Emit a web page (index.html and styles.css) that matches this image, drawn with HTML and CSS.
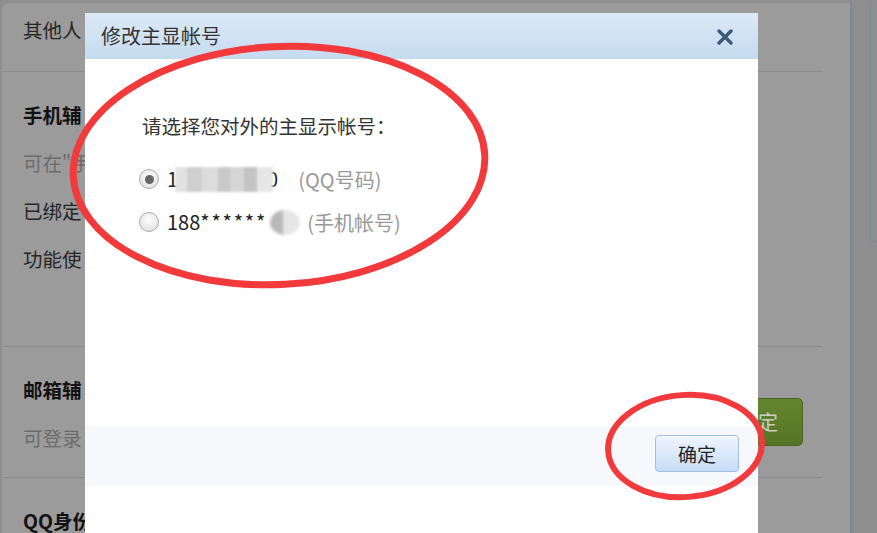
FILE: index.html
```html
<!DOCTYPE html>
<html lang="zh-CN">
<head>
<meta charset="utf-8">
<title>修改主显帐号</title>
<link rel="stylesheet" href="styles.css">
</head>
<body>
<div class="screen">
  <div class="page">
    <main class="main">
      <section class="sec sec-first">
        <p class="line">其他人</p>
      </section>
      <section class="sec sec-phone">
        <p class="line bold">手机辅</p>
        <p class="line muted">可在"手</p>
        <p class="line">已绑定</p>
        <p class="line">功能使</p>
      </section>
      <section class="sec sec-mail">
        <div class="mail-text">
          <p class="line bold">邮箱辅</p>
          <p class="line muted">可登录</p>
        </div>
        <span class="green-btn"><span class="green-hidden">确</span>定</span>
      </section>
      <section class="sec sec-qq">
        <p class="line bold">QQ身份</p>
      </section>
    </main>
    <aside class="side"><div class="side-box"></div></aside>
  </div>

  <div class="dialog">
    <div class="dlg-head">
      <span class="dlg-title">修改主显帐号</span>
      <svg class="dlg-close" width="16" height="16" viewBox="0 0 16 16" aria-label="关闭">
        <path d="M2 2 L14 14 M14 2 L2 14" stroke="#3d5a7b" stroke-width="3.4" stroke-linecap="round" fill="none"/>
      </svg>
    </div>
    <div class="dlg-body">
      <p class="prompt">请选择您对外的主显示帐号：</p>
      <label class="opt">
        <span class="radio checked"></span>
        <span class="acct">1<span class="blur blur-long"></span><span class="tail">0</span></span>
        <span class="hint hint-qq">(QQ号码)</span>
      </label>
      <label class="opt">
        <span class="radio"></span>
        <span class="acct">188<span class="stars">******</span><span class="blur blur-round"></span></span>
        <span class="hint">(手机帐号)</span>
      </label>
    </div>
    <div class="dlg-foot">
      <span class="ok-btn">确定</span>
    </div>
  </div>

  <svg class="marks" width="877" height="533" viewBox="0 0 877 533">
    <ellipse cx="279" cy="165.5" rx="206" ry="119" transform="rotate(-3 279 165.5)" fill="none" stroke="#f23a3c" stroke-width="7"/>
    <ellipse cx="685" cy="446" rx="77" ry="51" transform="rotate(-4 685 446)" fill="none" stroke="#f23a3c" stroke-width="6"/>
  </svg>
</div>
</body>
</html>
```

FILE: styles.css
```css
* { box-sizing: border-box; }

html, body {
  margin: 0;
  padding: 0;
}

body {
  font-family: "Noto Sans CJK SC", "Noto Sans", sans-serif;
  background: #8e8e8e;
}

p { margin: 0; }

.screen {
  position: relative;
  width: 877px;
  height: 533px;
  overflow: hidden;
  background: #8e8e8e;
}

/* ---------- dimmed background page ---------- */
.page {
  display: flex;
  height: 530px;
  margin: 3px 0 0 2px;
}

.main {
  width: 850px;
  flex: none;
  background: #9b9b9b;
  border-right: 2px solid #7e8893;
  border-top-left-radius: 6px;
}

.sec {
  margin: 0 28px 0 1px;
  padding-left: 20px;
  border-bottom: 1px solid #888b8e;
}

.line {
  font-size: 19.5px;
  line-height: 24px;
  color: #262626;
  white-space: nowrap;
}

.line.bold { font-weight: 700; color: #111; }
.line.muted { color: #6c6c6c; }

.sec-first {
  height: 69px;
  padding-top: 15px;
}

.sec-phone {
  height: 275px;
  padding-top: 31px;
  display: flex;
  flex-direction: column;
  gap: 24px;
}

.sec-mail {
  height: 131px;
  padding-top: 31px;
  display: flex;
  justify-content: space-between;
  align-items: flex-start;
}

.mail-text {
  display: flex;
  flex-direction: column;
  gap: 24px;
}

.green-btn {
  margin-top: 20px;
  margin-right: 19px;
  width: 90px;
  height: 48px;
  border-radius: 5px;
  background: linear-gradient(#63852f, #557526);
  border: 1px solid #4b6620;
  color: #c9cfc2;
  font-size: 20px;
  line-height: 46px;
  text-align: center;
}

.green-hidden { visibility: hidden; }

.sec-qq {
  border-bottom: none;
  padding-top: 31px;
}

.side {
  flex: 1;
  padding-left: 18px;
}

.side-box {
  height: 239px;
  border-left: 1px solid #7f8a96;
  border-bottom: 1px solid #7f8a96;
  border-bottom-left-radius: 3px;
}

/* ---------- dialog ---------- */
.dialog {
  position: absolute;
  left: 85px;
  top: 13px;
  width: 673px;
  bottom: 0;
  background: #fff;
  display: flex;
  flex-direction: column;
}

.dlg-head {
  height: 46px;
  flex: none;
  background: linear-gradient(#dce9f6, #c5dbf0);
  display: flex;
  align-items: center;
  justify-content: space-between;
  padding: 0 25px 0 16px;
}

.dlg-title {
  font-size: 20px;
  line-height: 24px;
  color: #333;
}

.dlg-close { display: block; margin-top: 1px; }

.dlg-body {
  height: 367px;
  flex: none;
  padding: 55px 0 0 54px;
}

.prompt {
  font-size: 19.5px;
  line-height: 24px;
  color: #333;
  padding-left: 3px;
  margin-bottom: 29px;
}

.opt {
  display: flex;
  align-items: center;
  height: 24px;
  margin-bottom: 19px;
  font-size: 20px;
  color: #222;
  white-space: nowrap;
}

.radio {
  width: 20px;
  height: 20px;
  border-radius: 50%;
  border: 1px solid #a9a9a9;
  background: radial-gradient(circle at 50% 35%, #fdfdfd, #dcdcdc);
  display: flex;
  align-items: center;
  justify-content: center;
  margin-right: 8px;
  flex: none;
}

.radio.checked::after {
  content: "";
  width: 9px;
  height: 9px;
  border-radius: 50%;
  background: #666;
}

.acct {
  display: flex;
  align-items: center;
  line-height: 24px;
}

.blur {
  display: inline-block;
  filter: blur(1.2px);
}

.blur-long {
  width: 98px;
  height: 25px;
  margin-left: -3px;
  background: linear-gradient(90deg,
    #e2e2e2 0 12%, #cfcfcf 12% 28%, #dcdcdc 28% 44%,
    #c9c9c9 44% 56%, #d6d6d6 56% 70%, #c4c4c4 70% 84%, #e6e6e6 84% 100%);
}

.tail {
  margin-left: -6px;
}

.stars { letter-spacing: 1.8px; }

.blur-round {
  width: 30px;
  height: 25px;
  border-radius: 50%;
  margin-left: 3px;
  background:
    linear-gradient(90deg, #b9b9b9 0 45%, #e6e6e6 45% 100%);
  filter: blur(1.5px);
}

.hint {
  color: #999;
  margin-left: 7px;
}

.hint-qq { margin-left: 20px; }

.dlg-foot {
  height: 60px;
  flex: none;
  background: #f6f8fb;
  display: flex;
  justify-content: flex-end;
  align-items: flex-start;
  padding: 9px 19px 0 0;
}

.ok-btn {
  width: 84px;
  height: 37px;
  border: 1px solid #a3bde0;
  border-radius: 4px;
  background: linear-gradient(#eef5fe, #c8dcf6);
  box-shadow: inset 0 1px 0 #fff;
  color: #222;
  font-size: 19px;
  line-height: 35px;
  text-align: center;
}

/* ---------- red annotation marks ---------- */
.marks {
  position: absolute;
  left: 0;
  top: 0;
  pointer-events: none;
}
```
